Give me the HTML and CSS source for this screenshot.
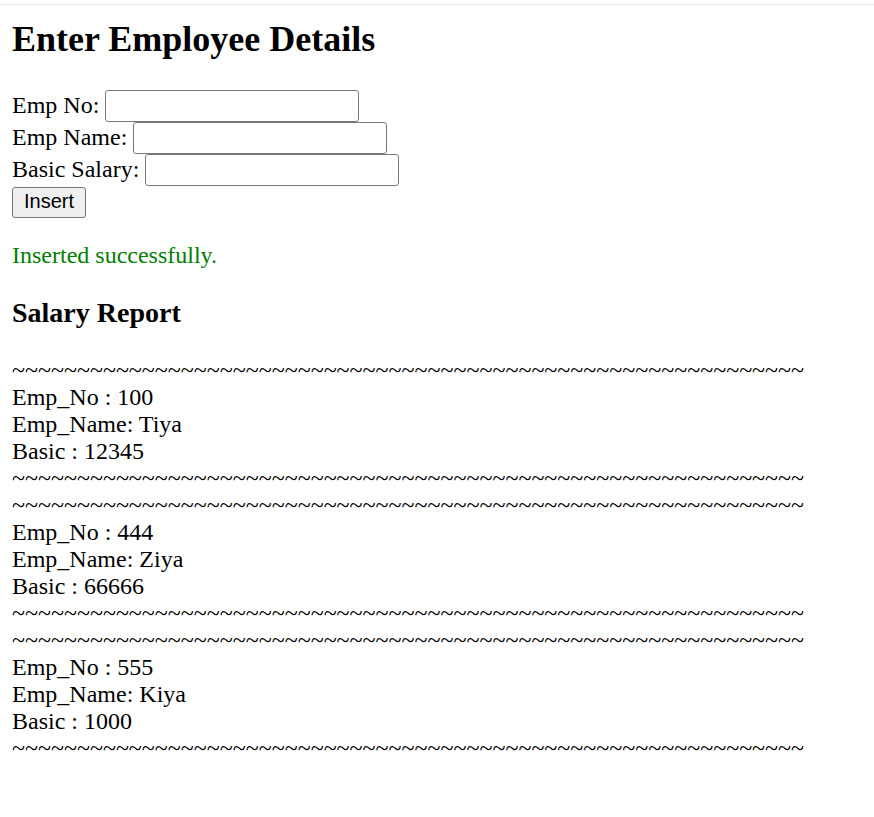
FILE: index.html
```html
<!DOCTYPE html>
<html>
<head>
<meta charset="utf-8">
<title>Employee Details</title>
<link rel="stylesheet" href="styles.css">
</head>
<body>
<div class="topline"></div>
<main class="page">
  <h2 class="title">Enter Employee Details</h2>
  <form class="emp-form">
    <div class="row"><label>Emp No:</label> <input type="text" class="field"></div>
    <div class="row"><label>Emp Name:</label> <input type="text" class="field"></div>
    <div class="row"><label>Basic Salary:</label> <input type="text" class="field"></div>
    <div class="row"><button type="button" class="btn">Insert</button></div>
  </form>
  <p class="msg">Inserted successfully.</p>
  <h3 class="report-title">Salary Report</h3>
  <div class="report">
    <div class="rec">
      <div class="sep">~~~~~~~~~~~~~~~~~~~~~~~~~~~~~~~~~~~~~~~~~~~~~~~~~~~~~~~~~~~~~</div>
      <div>Emp_No : 100</div>
      <div>Emp_Name: Tiya</div>
      <div>Basic : 12345</div>
      <div class="sep">~~~~~~~~~~~~~~~~~~~~~~~~~~~~~~~~~~~~~~~~~~~~~~~~~~~~~~~~~~~~~</div>
    </div>
    <div class="rec">
      <div class="sep">~~~~~~~~~~~~~~~~~~~~~~~~~~~~~~~~~~~~~~~~~~~~~~~~~~~~~~~~~~~~~</div>
      <div>Emp_No : 444</div>
      <div>Emp_Name: Ziya</div>
      <div>Basic : 66666</div>
      <div class="sep">~~~~~~~~~~~~~~~~~~~~~~~~~~~~~~~~~~~~~~~~~~~~~~~~~~~~~~~~~~~~~</div>
    </div>
    <div class="rec">
      <div class="sep">~~~~~~~~~~~~~~~~~~~~~~~~~~~~~~~~~~~~~~~~~~~~~~~~~~~~~~~~~~~~~</div>
      <div>Emp_No : 555</div>
      <div>Emp_Name: Kiya</div>
      <div>Basic : 1000</div>
      <div class="sep">~~~~~~~~~~~~~~~~~~~~~~~~~~~~~~~~~~~~~~~~~~~~~~~~~~~~~~~~~~~~~</div>
    </div>
  </div>
</main>
</body>
</html>
```

FILE: styles.css
```css
html, body {
  margin: 0;
  padding: 0;
  background: #ffffff;
}
body {
  font-family: "Liberation Serif", "Times New Roman", serif;
  font-size: 24px;
  color: #000000;
  padding-top: 4px;
}
.topline {
  height: 1px;
  background: #f3e3f3;
}
.page {
  padding: 0 12px;
}
.title {
  font-size: 36px;
  font-weight: bold;
  line-height: 41px;
  margin: 14px 0 30px;
}
.emp-form {
  margin: 0;
}
.row {
  display: flex;
  align-items: center;
  height: 32px;
  white-space: pre;
}
.row label {
  line-height: 27px;
  margin-right: 6px;
  margin-top: -2px;
}
.field {
  box-sizing: border-box;
  width: 254px;
  height: 32px;
  margin: 0;
  border: 1px solid #767676;
  border-radius: 3px;
  background: #ffffff;
  font-family: "Liberation Sans", Arial, sans-serif;
  font-size: 20px;
  padding: 1px 3px;
}
.btn {
  box-sizing: border-box;
  height: 31px;
  width: 74px;
  margin: 0;
  padding: 0 0 2px;
  border: 1px solid #767676;
  border-radius: 3px;
  background: #efefef;
  font-family: "Liberation Sans", Arial, sans-serif;
  font-size: 20px;
  color: #000000;
}
.msg {
  color: #008000;
  line-height: 27px;
  margin: 24px 0;
}
.report-title {
  font-size: 28px;
  font-weight: bold;
  line-height: 32px;
  margin: 28px 0;
}
.report {
  line-height: 27px;
}
.sep {
  white-space: nowrap;
}
```
